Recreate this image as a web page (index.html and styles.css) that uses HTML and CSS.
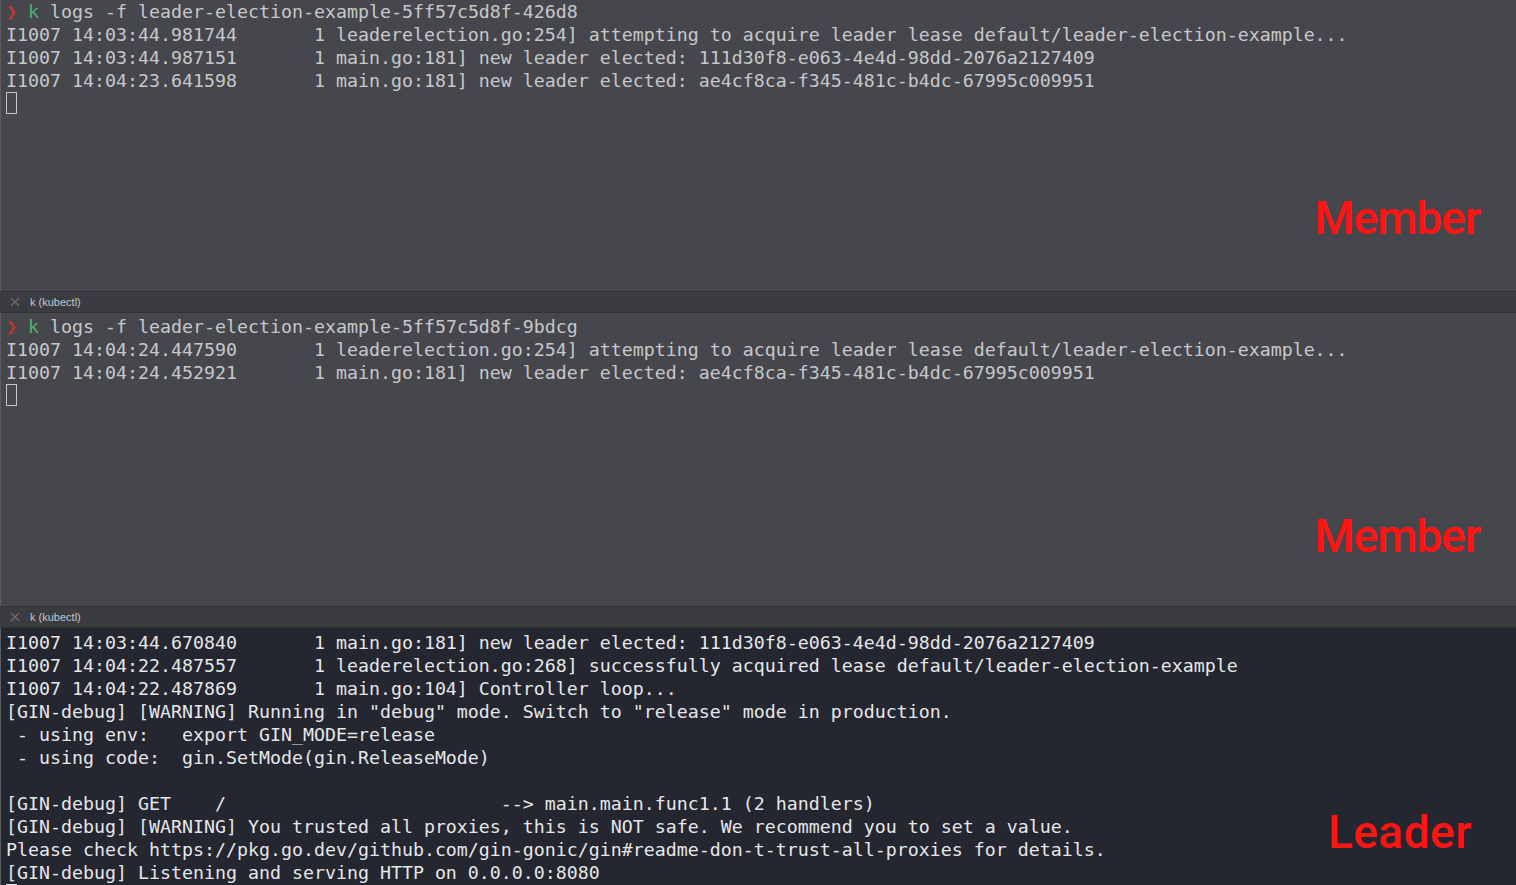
FILE: index.html
```html
<!DOCTYPE html>
<html lang="en">
<head>
<meta charset="utf-8">
<title>kubectl logs</title>
<link rel="stylesheet" href="styles.css">
</head>
<body>
<div class="term">
  <section class="pane pane-inactive pane-top">
<pre class="log"><span class="arrow">❯</span> <span class="cmd">k</span> logs -f leader-election-example-5ff57c5d8f-426d8
I1007 14:03:44.981744       1 leaderelection.go:254] attempting to acquire leader lease default/leader-election-example...
I1007 14:03:44.987151       1 main.go:181] new leader elected: 111d30f8-e063-4e4d-98dd-2076a2127409
I1007 14:04:23.641598       1 main.go:181] new leader elected: ae4cf8ca-f345-481c-b4dc-67995c009951
<span class="cursor cursor-hollow"> </span></pre>
    <div class="badge badge-member">Member</div>
  </section>
  <div class="tab">
    <svg class="tab-close" width="10" height="10" viewBox="0 0 10 10"><path d="M1 1L9 9M9 1L1 9" stroke="#6b6c70" stroke-width="1.2" fill="none"/></svg>
    <span class="tab-title">k (kubectl)</span>
  </div>
  <section class="pane pane-inactive pane-mid">
<pre class="log"><span class="arrow">❯</span> <span class="cmd">k</span> logs -f leader-election-example-5ff57c5d8f-9bdcg
I1007 14:04:24.447590       1 leaderelection.go:254] attempting to acquire leader lease default/leader-election-example...
I1007 14:04:24.452921       1 main.go:181] new leader elected: ae4cf8ca-f345-481c-b4dc-67995c009951
<span class="cursor cursor-hollow"> </span></pre>
    <div class="badge badge-member2">Member</div>
  </section>
  <div class="tab">
    <svg class="tab-close" width="10" height="10" viewBox="0 0 10 10"><path d="M1 1L9 9M9 1L1 9" stroke="#6b6c70" stroke-width="1.2" fill="none"/></svg>
    <span class="tab-title">k (kubectl)</span>
  </div>
  <section class="pane pane-active">
<pre class="log">I1007 14:03:44.670840       1 main.go:181] new leader elected: 111d30f8-e063-4e4d-98dd-2076a2127409
I1007 14:04:22.487557       1 leaderelection.go:268] successfully acquired lease default/leader-election-example
I1007 14:04:22.487869       1 main.go:104] Controller loop...
[GIN-debug] [WARNING] Running in "debug" mode. Switch to "release" mode in production.
 - using env:   export GIN_MODE=release
 - using code:  gin.SetMode(gin.ReleaseMode)

[GIN-debug] GET    /                         --> main.main.func1.1 (2 handlers)
[GIN-debug] [WARNING] You trusted all proxies, this is NOT safe. We recommend you to set a value.
Please check https://pkg.go.dev/github.com/gin-gonic/gin#readme-don-t-trust-all-proxies for details.
[GIN-debug] Listening and serving HTTP on 0.0.0.0:8080
<span class="cursor cursor-solid"> </span></pre>
    <div class="badge badge-leader">Leader</div>
  </section>
</div>
</body>
</html>
```

FILE: styles.css
```css
html, body {
  margin: 0;
  padding: 0;
  background: #242630;
}
.term {
  width: 1516px;
  height: 885px;
  display: flex;
  flex-direction: column;
  overflow: hidden;
}
.pane {
  position: relative;
  border-left: 1px solid #5c5d61;
  padding-left: 5px;
  overflow: hidden;
}
.pane-inactive {
  background: #46474c;
  color: #c6c7ca;
}
.pane-top {
  height: 291px;
  padding-top: 0;
  box-sizing: border-box;
}
.pane-mid {
  height: 293px;
  padding-top: 2px;
  box-sizing: border-box;
}
.pane-active {
  flex: 1;
  background: #242630;
  color: #e6e7e8;
  padding-top: 3px;
}
.log {
  margin: 0;
  font-family: "DejaVu Sans Mono", "Liberation Mono", monospace;
  font-size: 18.27px;
  line-height: 23px;
  white-space: pre;
}
.arrow {
  color: #c2362f;
}
.cmd {
  color: #4fb46c;
}
.cursor {
  display: inline-block;
  width: 11px;
  height: 22px;
  vertical-align: top;
  box-sizing: border-box;
}
.cursor-hollow {
  border: 1px solid #c6c7ca;
}
.cursor-solid {
  background: #e6e7e8;
}
.tab {
  height: 22px;
  box-sizing: border-box;
  background: #3b3c40;
  border-top: 1px solid #313236;
  border-bottom: 1px solid #313236;
  display: flex;
  align-items: center;
  padding-left: 10px;
  gap: 10px;
}
.tab-close {
  display: block;
}
.tab-title {
  font-family: "Liberation Sans", Arial, sans-serif;
  font-size: 11px;
  color: #c4c5c7;
}
.badge {
  position: absolute;
  font-family: Roboto, "Liberation Sans", sans-serif;
  font-weight: 500;
  font-size: 46px;
  line-height: 46px;
  color: #ff1414;
}
.badge-member {
  right: 36px;
  top: 195px;
  letter-spacing: -1px;
}
.badge-member2 {
  right: 36px;
  top: 200px;
  letter-spacing: -1px;
}
.badge-leader {
  right: 44px;
  top: 181px;
  letter-spacing: 0.5px;
}
```
